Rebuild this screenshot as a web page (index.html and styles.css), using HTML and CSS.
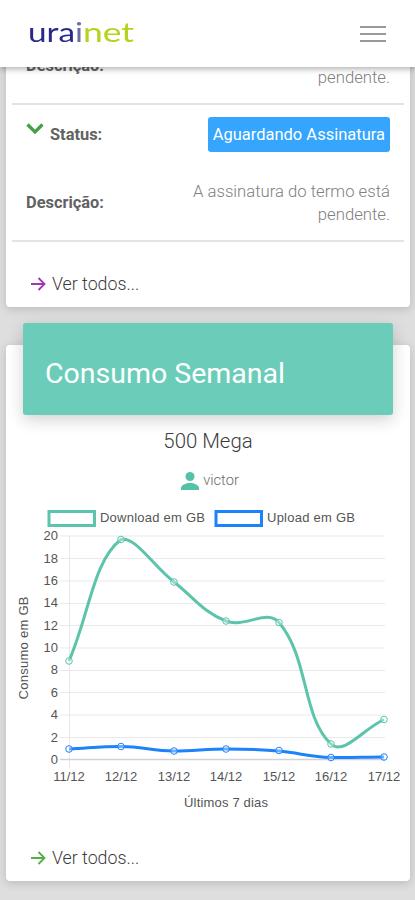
FILE: index.html
```html
<!DOCTYPE html>
<html lang="pt-BR">

<head>
    <meta charset="UTF-8">
    <meta name="viewport" content="width=device-width, initial-scale=1.0">
    <title>Urainet</title>
    <link rel="stylesheet" href="styles.css">
</head>

<body>
    <header class="navbar">
        <svg class="logo" width="120" height="48" viewBox="0 0 120 48">
            <text x="1" y="32" textLength="55" lengthAdjust="spacingAndGlyphs" fill="#29298a">ura<tspan fill="#66709f">i</tspan></text>
            <text x="56" y="32" textLength="51" lengthAdjust="spacingAndGlyphs" fill="#b5d31c">net</text>
        </svg>
        <button class="menu" aria-label="Menu"><span></span><span></span><span></span></button>
    </header>

    <main>
        <section class="card card-termos">
            <div class="termo">
                <div class="row descricao">
                    <b>Descrição:</b>
                    <p>A assinatura do termo está pendente.</p>
                </div>
            </div>
            <div class="termo">
                <div class="row status">
                    <b>
                        <svg class="chevron" width="18" height="12" viewBox="0 0 18 12">
                            <path d="M1.500 1.500L9 9l7.500-7.500" fill="none" stroke="#43a047" stroke-width="3.200" />
                        </svg>
                        <span>Status:</span>
                    </b>
                    <span class="badge">Aguardando Assinatura</span>
                </div>
                <div class="row descricao">
                    <b>Descrição:</b>
                    <p>A assinatura do termo está pendente.</p>
                </div>
            </div>
            <a class="ver-todos roxo">
                <svg width="15" height="14" viewBox="0 0 15 14">
                    <path d="M0 7h13M7.500 1l6 6-6 6" />
                </svg>
                <span>Ver todos...</span>
            </a>
        </section>

        <section class="card card-consumo">
            <h4 class="card-header">Consumo Semanal</h4>
            <h3 class="plano">500 Mega</h3>
            <div class="usuario">
                <svg width="18" height="18" viewBox="0 0 18 18" fill="#55c2a8">
                    <circle cx="9" cy="4.500" r="4.500" />
                    <path d="M0 18v-2c0-3 5-5 9-5s9 2 9 5v2z" />
                </svg>
                <span>victor</span>
            </div>

            <!-- grafico de consumo -->
            <svg class="grafico" width="404" height="310" viewBox="6 505 404 310">
                <g class="legenda">
                    <rect x="49" y="511.500" width="45.500" height="14" stroke="#5cc4ab" />
                    <text x="100" y="522" textLength="105">Download em GB</text>
                    <rect x="216" y="511.500" width="45.500" height="14" stroke="#1c83fb" />
                    <text x="267" y="522" textLength="88">Upload em GB</text>
                </g>
                <path class="grade" d="M60 536H385M60 558.500H385M60 581H385M60 603.500H385M60 625.500H385M60 648H385M60 670.500H385M60 692.500H385M60 715H385M60 737.500H385M69.500 536V768" />
                <path class="base" d="M60 759.500H385" />
                <g class="eixo-y">
                    <text x="58" y="540">20</text>
                    <text x="58" y="563">18</text>
                    <text x="58" y="585">16</text>
                    <text x="58" y="607">14</text>
                    <text x="58" y="630">12</text>
                    <text x="58" y="652">10</text>
                    <text x="58" y="674">8</text>
                    <text x="58" y="697">6</text>
                    <text x="58" y="719">4</text>
                    <text x="58" y="742">2</text>
                    <text x="58" y="764">0</text>
                </g>
                <g class="eixo-x">
                    <text x="69" y="781">11/12</text>
                    <text x="121" y="781">12/12</text>
                    <text x="174" y="781">13/12</text>
                    <text x="226" y="781">14/12</text>
                    <text x="279" y="781">15/12</text>
                    <text x="331" y="781">16/12</text>
                    <text x="384" y="781">17/12</text>
                    <text x="226" y="807" textLength="84">Últimos 7 dias</text>
                    <text transform="translate(28 648) rotate(-90)" textLength="103">Consumo em GB</text>
                </g>
                <g class="upload">
                    <path d="M69 749C90 748 100 746.500 121 746.500S153 751 174 751S205 749 226 749S258 749 279 751S310 757 331 757.500S363 757 384 757" />
                    <circle cx="69" cy="749" r="3.300" />
                    <circle cx="121" cy="746.500" r="3.300" />
                    <circle cx="174" cy="751" r="3.300" />
                    <circle cx="226" cy="749" r="3.300" />
                    <circle cx="279" cy="750.500" r="3.300" />
                    <circle cx="331" cy="757.500" r="3.300" />
                    <circle cx="384" cy="757" r="3.300" />
                </g>
                <g class="download">
                    <path d="M69 661C89.800 612.400 93.300 560.400 121 539.500C135.300 536 152.600 565.400 174 582C194.600 598 202.900 612.100 226 621C244.900 628.300 267 608.500 279 622.500C309 657.700 301.900 717.100 331 744C343.800 755.800 362.800 729.300 384 719.500" />
                    <circle cx="69" cy="661" r="3.300" />
                    <circle cx="121" cy="539.500" r="3.300" />
                    <circle cx="174" cy="582" r="3.300" />
                    <circle cx="226" cy="621" r="3.300" />
                    <circle cx="279" cy="622.500" r="3.300" />
                    <circle cx="331" cy="744" r="3.300" />
                    <circle cx="384" cy="719.500" r="3.300" />
                </g>
            </svg>

            <a class="ver-todos verde">
                <svg width="15" height="14" viewBox="0 0 15 14">
                    <path d="M0 7h13M7.500 1l6 6-6 6" />
                </svg>
                <span>Ver todos...</span>
            </a>
        </section>
    </main>
</body>

</html>
```
FILE: styles.css
```css
* {
    box-sizing: border-box;
}

body {
    margin: 0;
    height: 900px;
    overflow: hidden;
    background-color: #dedede;
    color: #3c3c3c;
    font-family: Roboto, "Liberation Sans", sans-serif;
    font-size: 16.7px;
    font-weight: 300;
}

h3,
h4,
p {
    margin: 0;
}

.navbar {
    position: fixed;
    top: 0;
    left: 0;
    z-index: 10;
    display: flex;
    align-items: center;
    justify-content: space-between;
    width: 100%;
    height: 67px;
    padding: 0 29px 0 27px;
    background-color: #fff;
    box-shadow: 0 1px 7px rgba(0, 0, 0, .4);
}

.logo text {
    font-family: Lato, sans-serif;
    font-size: 27px;
    font-weight: 400;
}

.menu {
    display: flex;
    flex-direction: column;
    gap: 5px;
    padding: 0;
    border: 0;
    background: none;
}

.menu span {
    width: 26px;
    height: 2px;
    background-color: #999;
}

.card {
    width: 404px;
    margin-left: 6px;
    border-radius: 4px;
    background-color: #fff;
    box-shadow: 0 2px 10px rgba(0, 0, 0, .17);
}

.card-termos {
    height: 307px;
    padding: 28px 6px 0;
}

.termo {
    border-bottom: 2px solid #e4e4e4;
}

.row {
    display: flex;
    align-items: center;
    justify-content: space-between;
    padding: 0 14px;
}

.row b {
    color: #626262;
    font-size: 16.4px;
    font-weight: 700;
}

.row p {
    width: 205px;
    color: #808080;
    line-height: 23px;
    text-align: right;
}

.descricao {
    height: 75px;
}

.status {
    height: 58px;
    margin-bottom: 2px;
}

.status b {
    display: flex;
    align-items: flex-start;
    gap: 6px;
}

.chevron {
    margin-top: -2px;
}

.badge {
    padding: 0 5px;
    border-radius: 3px;
    background-color: #36a5fd;
    color: #fff;
    font-size: 16.5px;
    font-weight: 400;
    line-height: 35px;
}

.ver-todos {
    display: flex;
    align-items: center;
    gap: 6px;
    font-size: 17.8px;
    line-height: 24px;
}

.ver-todos path {
    fill: none;
    stroke-width: 1.8;
}

.roxo {
    margin: 30px 0 0 19px;
}

.roxo path {
    stroke: #a234b5;
}

.verde {
    margin: 31px 0 0 25px;
}

.verde path {
    stroke: #55ad45;
}

.card-consumo {
    display: flow-root;
    height: 536px;
    margin-top: 38px;
}

.card-header {
    height: 92px;
    margin: -22px 17px 0;
    padding-left: 22px;
    border-radius: 3px;
    background-color: #6bcdb9;
    box-shadow: 0 5px 16px rgba(0, 0, 0, .18);
    color: #fff;
    font-size: 28.5px;
    font-weight: 400;
    line-height: 101px;
}

.plano {
    margin-top: 12px;
    font-size: 20.4px;
    font-weight: 300;
    line-height: 28px;
    text-align: center;
}

.usuario {
    display: flex;
    align-items: center;
    justify-content: center;
    gap: 4px;
    height: 20px;
    margin-top: 16px;
    padding-left: 4px;
    color: #6c6c6c;
    font-size: 14.7px;
}

.usuario span {
    margin-top: -2px;
}

.grafico {
    display: block;
    margin-top: 14px;
}

.grafico text {
    fill: #555;
    font-family: "Liberation Sans", Arial, sans-serif;
    font-size: 13px;
    font-weight: 400;
}

.legenda rect {
    fill: #fff;
    stroke-width: 3;
}

.grade,
.base {
    fill: none;
    stroke: #e9e9e9;
}

.base {
    stroke: #d2d2d2;
    stroke-width: 1.5;
}

.eixo-y text {
    text-anchor: end;
}

.eixo-x text {
    text-anchor: middle;
}

.upload path,
.download path {
    fill: none;
    stroke-width: 3;
}

.upload circle,
.download circle {
    fill: rgba(255, 255, 255, .35);
    stroke-width: 1;
}

.upload {
    stroke: #1c83fb;
}

.download {
    stroke: #5cc4ab;
}

.grafico g text {
    stroke: none;
}
```
